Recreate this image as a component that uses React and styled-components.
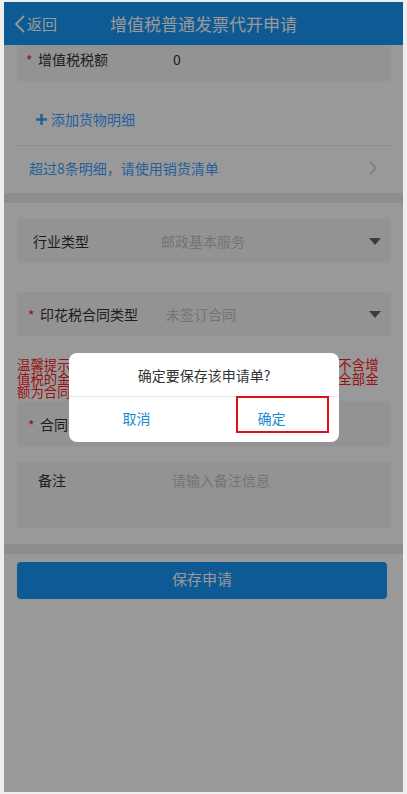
import React from 'react'
import styled, { createGlobalStyle } from 'styled-components'

const GlobalStyle = createGlobalStyle`
  html, body {
    margin: 0;
    padding: 0;
    background: #efefef;
  }
  * { box-sizing: border-box; }
  body {
    font-family: "Noto Sans CJK SC", "Noto Sans", sans-serif;
  }
`

const Frame = styled.div`
  width: 407px;
  height: 794px;
  padding: 2px 4px 2px 4px;
`

const Screen = styled.div`
  position: relative;
  height: 790px;
  background: #fff;
  display: flex;
  flex-direction: column;
  overflow: hidden;
`

const Header = styled.header`
  height: 43px;
  flex: none;
  background: #1796f8;
  color: #fff;
  display: flex;
  align-items: center;
  position: relative;
  z-index: 1;
  .back {
    display: flex;
    align-items: center;
    padding-left: 10px;
    font-size: 15px;
    width: 106px;
    gap: 1px;
  }
  h1 {
    margin: 0;
    font-size: 17px;
    font-weight: normal;
  }
`

const Body = styled.div`
  flex: 1;
  overflow: hidden;
`

const Scroll = styled.div`
  margin-top: -8px;
  display: flex;
  flex-direction: column;
`

const Card = styled.div`
  margin: ${p => p.$top || 0}px 12px 0 13px;
  height: ${p => p.$h || 44}px;
  background: #f5f5f5;
  border-radius: 3px;
  display: flex;
  align-items: ${p => (p.$tall ? 'flex-start' : 'center')};
  padding-top: ${p => (p.$tall ? 8 : 0)}px;
  position: relative;
  font-size: 14px;
  color: #333;
`

const Label = styled.div`
  display: flex;
  align-items: center;
  padding-left: ${p => p.$pad}px;
  width: ${p => p.$w}px;
  flex: none;
  .star {
    color: #ff2020;
    width: 12px;
    font-size: 14px;
    margin-top: 2px;
  }
`

const Value = styled.div`
  color: ${p => (p.$placeholder ? '#c2c2c2' : '#333')};
`

const Caret = styled.span`
  position: absolute;
  right: 10px;
  top: 50%;
  margin-top: -3px;
  width: 0;
  height: 0;
  border-left: 6px solid transparent;
  border-right: 6px solid transparent;
  border-top: 7px solid #666;
`

const AddRow = styled.div`
  padding: 28px 0 16px 32px;
  display: flex;
  align-items: center;
  gap: 4px;
  line-height: 20px;
  font-size: 14px;
  color: #3fa0ff;
`

const Divider = styled.div`
  margin: 0 12px 0 13px;
  height: 1px;
  background: #ebebeb;
`

const ListRow = styled.div`
  margin: 0 12px 0 13px;
  height: 47px;
  display: flex;
  align-items: center;
  justify-content: space-between;
  padding: 0 14px 4px 12px;
  font-size: 14px;
  color: #3fa0ff;
`

const Band = styled.div`
  height: 10px;
  margin-top: ${p => p.$top || 0}px;
  background: #ececec;
`

const Warning = styled.p`
  margin: 22px 22px 0 13px;
  font-size: 13.4px;
  line-height: 13.6px;
  color: #ff2020;
`

const SaveButton = styled.button`
  margin: 8px 16px 0 13px;
  height: 37px;
  padding: 0 0 4px;
  border: none;
  border-radius: 4px;
  background: #1796f8;
  color: #fff;
  font-family: inherit;
  font-size: 15px;
`

const Overlay = styled.div`
  position: absolute;
  inset: 0;
  background: rgba(0, 0, 0, 0.4);
  z-index: 2;
`

const Dialog = styled.div`
  position: absolute;
  left: 65px;
  top: 351px;
  width: 270px;
  height: 89px;
  background: #fff;
  border-radius: 8px;
  z-index: 3;
  display: flex;
  flex-direction: column;
`

const DialogTitle = styled.div`
  height: 44px;
  display: flex;
  align-items: center;
  justify-content: center;
  font-size: 14px;
  color: #333;
  border-bottom: 1px solid #e6e6e6;
`

const DialogActions = styled.div`
  flex: 1;
  display: grid;
  grid-template-columns: 1fr 1fr;
  position: relative;
`

const DialogButton = styled.div`
  display: flex;
  align-items: center;
  justify-content: center;
  font-size: 14px;
  color: #1a8ad6;
  padding-bottom: 4px;
`

const Highlight = styled.div`
  position: absolute;
  left: 167px;
  top: -1px;
  width: 93px;
  height: 37px;
  border: 2px solid #d9121b;
`

const Field = ({ star, label, value, placeholder, pad, w, caret, ...rest }) => (
  <Card {...rest}>
    <Label $pad={pad} $w={w}>
      {star && <span className='star'>*</span>}
      <span>{label}</span>
    </Label>
    <Value $placeholder={placeholder}>{value}</Value>
    {caret && <Caret />}
  </Card>
)

const App = () => {
  return (
    <>
      <GlobalStyle />
      <Frame>
        <Screen>
          <Header>
            <div className='back'>
              <svg width='12' height='18' viewBox='0 0 12 18'>
                <path d='M10 1 L2 9 L10 17' fill='none' stroke='#fff' strokeWidth='1.8' />
              </svg>
              <span>返回</span>
            </div>
            <h1>增值税普通发票代开申请</h1>
          </Header>
          <Body>
            <Scroll>
              <Field star label='增值税税额' value='0' pad={9} w={156} $top={0} />
              <AddRow>
                <svg width='11' height='11' viewBox='0 0 11 11'>
                  <path d='M5.5 0 V11 M0 5.5 H11' stroke='#3fa0ff' strokeWidth='2.6' />
                </svg>
                <span>添加货物明细</span>
              </AddRow>
              <Divider />
              <ListRow>
                <span>超过8条明细，请使用销货清单</span>
                <svg width='8' height='14' viewBox='0 0 8 14'>
                  <path d='M1 1 L7 7 L1 13' fill='none' stroke='#c8c8c8' strokeWidth='1.3' />
                </svg>
              </ListRow>
              <Band />
              <Field label='行业类型' value='邮政基本服务' placeholder pad={16} w={144} caret $top={16} />
              <Field star label='印花税合同类型' value='未签订合同' placeholder pad={11} w={149} caret $top={29} />
              <Warning>
                温馨提示：合同金额是指合同上所载明的金额，如果为不含增值税的金额，请直接填写；如果为含增值税金额请填写全部金额为合同金额。
              </Warning>
              <Field star label='合同金额' value='' pad={11} w={149} $top={2} $h={46} />
              <Field label='备注' value='请输入备注信息' placeholder pad={21} w={155} $top={15} $h={66} $tall />
              <Band $top={16} />
              <SaveButton>保存申请</SaveButton>
            </Scroll>
          </Body>
          <Overlay />
          <Dialog>
            <DialogTitle>确定要保存该申请单?</DialogTitle>
            <DialogActions>
              <DialogButton>取消</DialogButton>
              <DialogButton>确定</DialogButton>
              <Highlight />
            </DialogActions>
          </Dialog>
        </Screen>
      </Frame>
    </>
  )
}

export default App
